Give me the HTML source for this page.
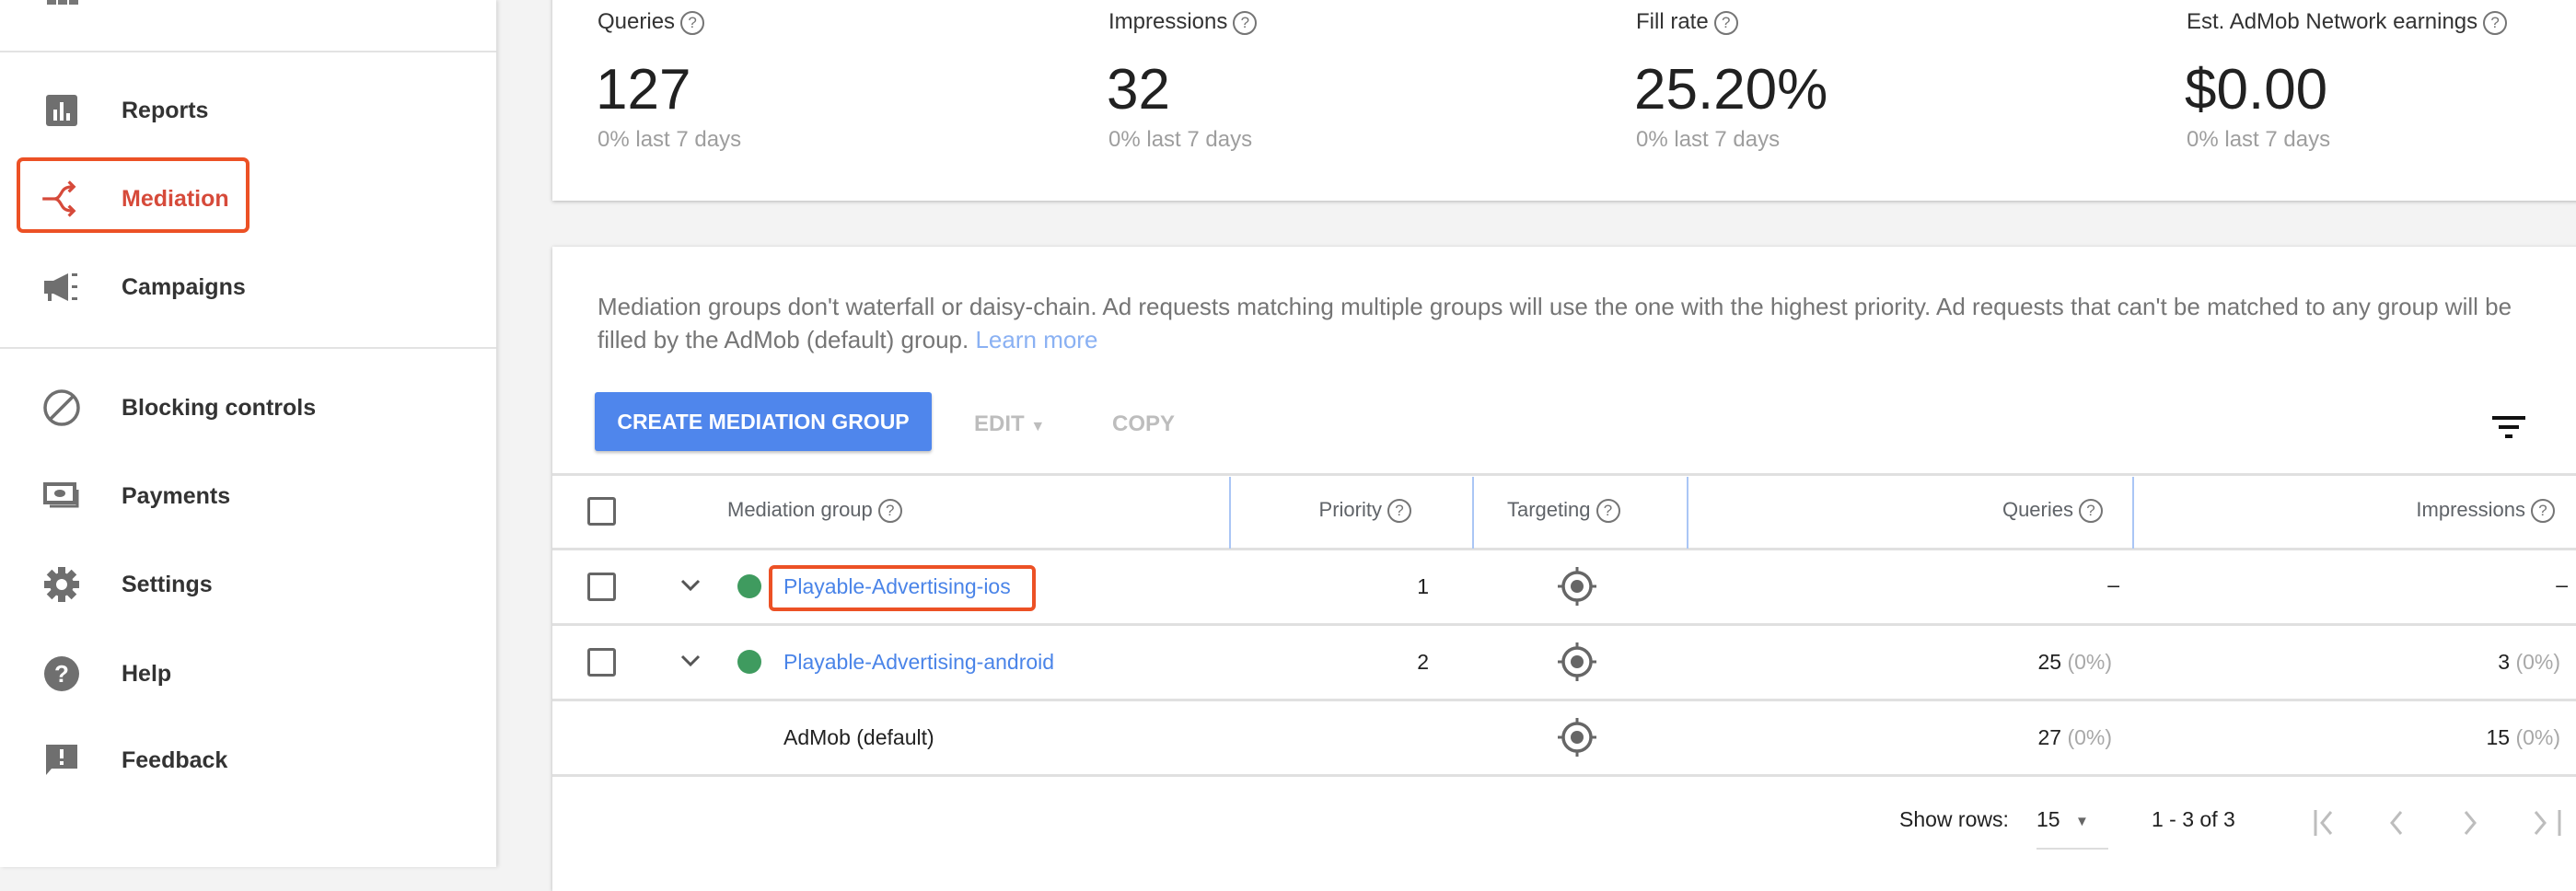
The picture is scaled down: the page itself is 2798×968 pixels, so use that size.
<!DOCTYPE html>
<html><head><meta charset="utf-8"><style>
*{margin:0;padding:0;box-sizing:border-box}
body{width:2798px;height:942px;overflow:hidden;background:#f3f3f3;font-family:"Liberation Sans",Arial,sans-serif;position:relative;color:#212121}
.a{position:absolute;white-space:nowrap}
#side{position:absolute;left:0;top:0;width:539px;height:942px;background:#fff;box-shadow:2px 0 4px rgba(0,0,0,.12)}
.hr{position:absolute;left:0;width:539px;height:2px;background:#e3e3e3}
.nav{position:absolute;left:132px;font-size:25px;font-weight:bold;color:#333;line-height:30px}
.ic{position:absolute;left:46px;width:42px;height:42px}
.card{position:absolute;background:#fff;box-shadow:0 1px 4px rgba(0,0,0,.25)}
.lbl{font-size:24px;color:#333}
.big{font-size:62px;color:#212121}
.sub{font-size:24px;color:#9e9e9e}
.q{display:inline-block;width:26px;height:26px;border:2px solid #757575;border-radius:50%;font-size:17px;line-height:22px;text-align:center;color:#757575;vertical-align:middle;margin-left:6px}
.th{font-size:22px;color:#5f6368}
.td{font-size:23px;color:#212121}
.cb{position:absolute;left:638px;width:31px;height:31px;border:3px solid #666;border-radius:3px}
.line{position:absolute;left:600px;width:2198px;height:3px;background:#e0e0e0}
.vs{position:absolute;top:518px;width:2px;height:78px;background:#aac6f5}
.lnk{color:#4a84e8}
.gr{color:#a8a8a8}
</style></head><body>
<div id="side">
 <div class="a" style="left:51px;top:0;width:10px;height:5px;background:#777"></div>
 <div class="a" style="left:63px;top:0;width:10px;height:5px;background:#777"></div>
 <div class="a" style="left:75px;top:0;width:10px;height:5px;background:#777"></div>
 <div class="hr" style="top:55px"></div>
 <div class="hr" style="top:377px"></div>
 <svg class="ic" style="top:99px" viewBox="0 0 42 42"><rect x="4" y="4" width="34" height="34" rx="3" fill="#6f6f6f"/><rect x="12" y="20" width="4" height="12" fill="#fff"/><rect x="19" y="12" width="4" height="20" fill="#fff"/><rect x="26" y="24" width="4" height="8" fill="#fff"/></svg>
 <div class="nav" style="top:105px">Reports</div>
 <div class="a" style="left:18px;top:171px;width:253px;height:82px;border:4px solid #ec5125;border-radius:7px"></div>
 <svg class="ic" style="top:193px;left:44px;width:46px;height:46px" viewBox="0 0 42 42" fill="none" stroke="#d64a3a" stroke-width="3"><path d="M2 21H14C18 21 20 16 22 13C24 10 27 9 32 9M14 21C18 21 20 26 22 29C24 32 27 33 32 33"/><path d="M28 4L33 9L28 14M28 28L33 33L28 38"/></svg>
 <div class="nav" style="top:201px;color:#d64a3a">Mediation</div>
 <svg class="ic" style="top:291px" viewBox="0 0 42 42"><path d="M2 14H12L28 6V36L12 28H10V36H6V28H2Z" fill="#6f6f6f"/><rect x="32" y="6" width="6" height="3" fill="#6f6f6f"/><rect x="32" y="19" width="6" height="3" fill="#6f6f6f"/><rect x="32" y="32" width="6" height="3" fill="#6f6f6f"/></svg>
 <div class="nav" style="top:297px">Campaigns</div>
 <svg class="ic" style="top:422px" viewBox="0 0 42 42" fill="none" stroke="#6f6f6f" stroke-width="3.5"><circle cx="21" cy="21" r="18"/><path d="M8 34L34 8"/></svg>
 <div class="nav" style="top:428px">Blocking controls</div>
 <svg class="ic" style="top:518px" viewBox="0 0 42 42"><rect x="3" y="8" width="32" height="20" fill="none" stroke="#6f6f6f" stroke-width="4"/><ellipse cx="19" cy="18" rx="6" ry="4" fill="#6f6f6f"/><path d="M38 14V32H8" fill="none" stroke="#6f6f6f" stroke-width="3"/></svg>
 <div class="nav" style="top:524px">Payments</div>
 <svg class="ic" style="top:614px" viewBox="0 0 42 42"><circle cx="21" cy="21" r="13" fill="#6f6f6f"/><g fill="#6f6f6f"><rect x="17" y="2" width="8" height="38"/><rect x="2" y="17" width="38" height="8"/><rect x="17" y="2" width="8" height="38" transform="rotate(45 21 21)"/><rect x="17" y="2" width="8" height="38" transform="rotate(-45 21 21)"/></g><circle cx="21" cy="21" r="6" fill="#fff"/></svg>
 <div class="nav" style="top:620px">Settings</div>
 <svg class="ic" style="top:711px" viewBox="0 0 42 42"><circle cx="21" cy="21" r="19" fill="#6f6f6f"/><text x="21" y="30" text-anchor="middle" font-size="26" font-weight="bold" fill="#fff" font-family="Liberation Sans">?</text></svg>
 <div class="nav" style="top:717px">Help</div>
 <svg class="ic" style="top:805px" viewBox="0 0 42 42"><path d="M4 4H38V30H10L4 37Z" fill="#6f6f6f"/><rect x="19" y="9" width="4" height="10" fill="#fff"/><rect x="19" y="22" width="4" height="4" fill="#fff"/></svg>
 <div class="nav" style="top:811px">Feedback</div>
</div>

<div class="card" style="left:600px;top:-10px;width:2210px;height:228px"></div>
<div class="a lbl" style="left:649px;top:10px">Queries<span class="q">?</span></div>
<div class="a lbl" style="left:1204px;top:10px">Impressions<span class="q">?</span></div>
<div class="a lbl" style="left:1777px;top:10px">Fill rate<span class="q">?</span></div>
<div class="a lbl" style="left:2375px;top:10px">Est. AdMob Network earnings<span class="q">?</span></div>
<div class="a big" style="left:647px;top:62px">127</div>
<div class="a big" style="left:1202px;top:62px">32</div>
<div class="a big" style="left:1775px;top:62px">25.20%</div>
<div class="a big" style="left:2373px;top:62px">$0.00</div>
<div class="a sub" style="left:649px;top:138px">0% last 7 days</div>
<div class="a sub" style="left:1204px;top:138px">0% last 7 days</div>
<div class="a sub" style="left:1777px;top:138px">0% last 7 days</div>
<div class="a sub" style="left:2375px;top:138px">0% last 7 days</div>

<div class="card" style="left:600px;top:268px;width:2210px;height:700px"></div>
<div class="a" style="left:649px;top:315px;font-size:26px;color:#757575;line-height:36px">Mediation groups don't waterfall or daisy-chain. Ad requests matching multiple groups will use the one with the highest priority. Ad requests that can't be matched to any group will be<br>filled by the AdMob (default) group. <span style="color:#8ab1f3">Learn more</span></div>
<div class="a" style="left:646px;top:426px;width:366px;height:64px;background:#4f86ec;border-radius:3px;box-shadow:0 2px 3px rgba(0,0,0,.25);color:#fff;font-size:23px;font-weight:bold;line-height:64px;text-align:center">CREATE MEDIATION GROUP</div>
<div class="a" style="left:1058px;top:447px;font-size:24px;font-weight:bold;color:#bdbdbd">EDIT <span style="font-size:16px">&#9660;</span></div>
<div class="a" style="left:1208px;top:447px;font-size:24px;font-weight:bold;color:#bdbdbd">COPY</div>
<svg class="a" style="left:2705px;top:450px" width="40" height="30" viewBox="0 0 40 30"><rect x="2" y="2" width="36" height="4" fill="#111"/><rect x="9" y="12" width="22" height="4" fill="#111"/><rect x="16" y="22" width="8" height="4" fill="#111"/></svg>

<div class="line" style="top:514px"></div>
<div class="line" style="top:595px"></div>
<div class="line" style="top:677px"></div>
<div class="line" style="top:759px"></div>
<div class="line" style="top:841px"></div>
<div class="vs" style="left:1335px"></div>
<div class="vs" style="left:1599px"></div>
<div class="vs" style="left:1832px"></div>
<div class="vs" style="left:2316px"></div>

<div class="cb" style="top:540px"></div>
<div class="cb" style="top:622px"></div>
<div class="cb" style="top:704px"></div>

<div class="a th" style="left:790px;top:541px">Mediation group<span class="q">?</span></div>
<div class="a th" style="right:1265px;top:541px">Priority<span class="q">?</span></div>
<div class="a th" style="left:1637px;top:541px">Targeting<span class="q">?</span></div>
<div class="a th" style="right:514px;top:541px">Queries<span class="q">?</span></div>
<div class="a th" style="right:23px;top:541px">Impressions<span class="q">?</span></div>

<svg class="a" style="left:738px;top:628px" width="24" height="16" viewBox="0 0 24 16"><path d="M3 3L12 12L21 3" fill="none" stroke="#555" stroke-width="3"/></svg>
<svg class="a" style="left:738px;top:710px" width="24" height="16" viewBox="0 0 24 16"><path d="M3 3L12 12L21 3" fill="none" stroke="#555" stroke-width="3"/></svg>
<div class="a" style="left:801px;top:624px;width:26px;height:26px;border-radius:50%;background:#3f9b5f"></div>
<div class="a" style="left:801px;top:706px;width:26px;height:26px;border-radius:50%;background:#3f9b5f"></div>
<div class="a" style="left:835px;top:614px;width:290px;height:50px;border:4px solid #ec5125;border-radius:6px"></div>
<div class="a td lnk" style="left:851px;top:624px">Playable-Advertising-ios</div>
<div class="a td lnk" style="left:851px;top:706px">Playable-Advertising-android</div>
<div class="a td" style="left:851px;top:788px">AdMob (default)</div>
<div class="a td" style="right:1246px;top:624px">1</div>
<div class="a td" style="right:1246px;top:706px">2</div>

<svg class="a" style="left:1691px;top:614px" width="44" height="46" viewBox="0 0 44 46"><circle cx="22" cy="23" r="15" fill="none" stroke="#666" stroke-width="3.5"/><circle cx="22" cy="23" r="7" fill="#666"/><path d="M22 2V8M22 38V44M1 23H7M37 23H43" stroke="#666" stroke-width="3"/></svg>
<svg class="a" style="left:1691px;top:696px" width="44" height="46" viewBox="0 0 44 46"><circle cx="22" cy="23" r="15" fill="none" stroke="#666" stroke-width="3.5"/><circle cx="22" cy="23" r="7" fill="#666"/><path d="M22 2V8M22 38V44M1 23H7M37 23H43" stroke="#666" stroke-width="3"/></svg>
<svg class="a" style="left:1691px;top:778px" width="44" height="46" viewBox="0 0 44 46"><circle cx="22" cy="23" r="15" fill="none" stroke="#666" stroke-width="3.5"/><circle cx="22" cy="23" r="7" fill="#666"/><path d="M22 2V8M22 38V44M1 23H7M37 23H43" stroke="#666" stroke-width="3"/></svg>

<div class="a td" style="right:496px;top:622px">–</div>
<div class="a td" style="right:9px;top:622px">–</div>
<div class="a td" style="right:504px;top:706px">25 <span class="gr">(0%)</span></div>
<div class="a td" style="right:17px;top:706px">3 <span class="gr">(0%)</span></div>
<div class="a td" style="right:504px;top:788px">27 <span class="gr">(0%)</span></div>
<div class="a td" style="right:17px;top:788px">15 <span class="gr">(0%)</span></div>

<div class="a td" style="left:2063px;top:877px">Show rows:</div>
<div class="a td" style="left:2212px;top:877px">15</div>
<div class="a" style="left:2254px;top:884px;font-size:15px;color:#666">&#9660;</div>
<div class="a" style="left:2212px;top:921px;width:78px;height:2px;background:#ddd"></div>
<div class="a td" style="left:2337px;top:877px">1 - 3 of 3</div>
<svg class="a" style="left:2510px;top:876px" width="280" height="36" viewBox="0 0 280 36" fill="none" stroke="#bdbdbd" stroke-width="3"><path d="M5 4V32M22 6L12 18L22 30"/><path d="M98 6L88 18L98 30"/><path d="M168 6L178 18L168 30"/><path d="M244 6L254 18L244 30M270 4V32"/></svg>
</body></html>
